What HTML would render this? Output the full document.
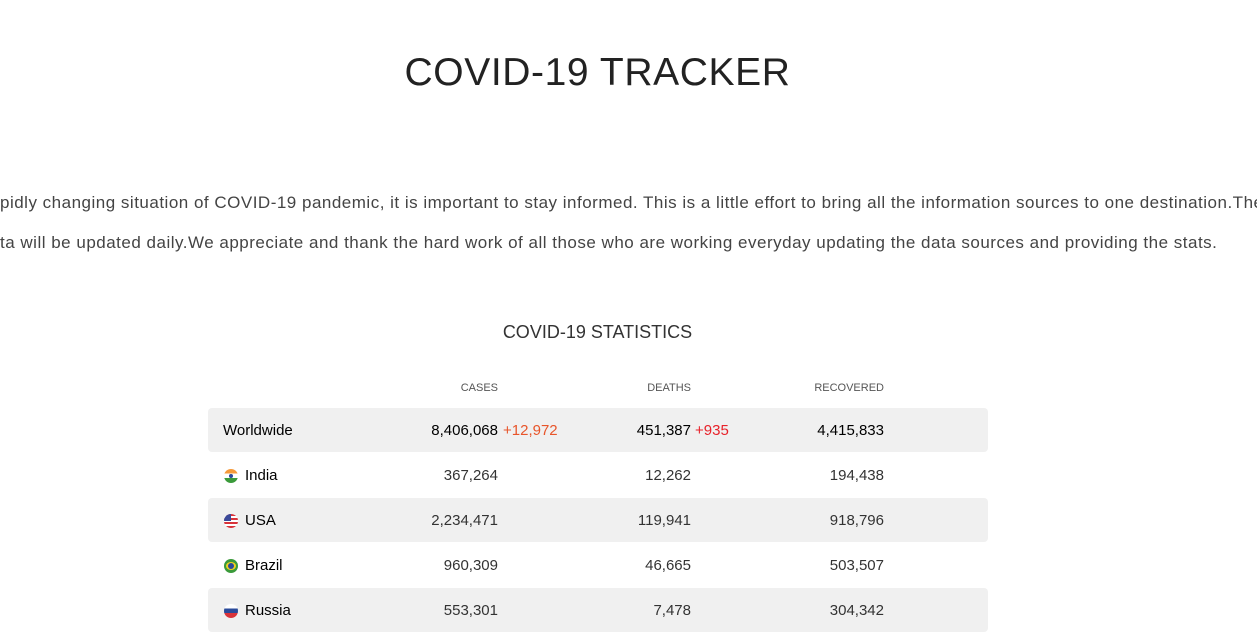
<!DOCTYPE html>
<html><head><meta charset="utf-8"><style>
*{margin:0;padding:0;box-sizing:border-box}
body{width:1257px;height:607px;overflow:hidden;background:#fff;font-family:"Liberation Sans",sans-serif;color:#000;position:relative}
h1{position:absolute;top:51px;left:0;width:1195px;text-align:center;font-weight:normal;font-size:39px;letter-spacing:0.6px;color:#222}
.p{position:absolute;left:0;white-space:nowrap;font-size:17px;letter-spacing:0.5px;color:#444}
h2{position:absolute;top:322px;left:0;width:1195px;text-align:center;font-weight:normal;font-size:18px;color:#333}
.hd{position:absolute;top:382px;font-size:11px;color:#555;text-align:right}
.row{position:absolute;left:208px;width:780px;height:44px;border-radius:4px}
.g{background:#f0f0f0}
.row span{position:absolute;top:14px;font-size:15px;white-space:nowrap;color:#333}
.n{left:15px}
.d{right:297px}
.r{right:104px}
.fl{position:absolute;left:16px;top:16px;width:14px;height:14px;border-radius:50%;overflow:hidden}
</style></head><body>
<h1>COVID-19 TRACKER</h1>
<div class="p" style="top:193px">pidly changing situation of COVID-19 pandemic, it is important to stay informed. This is a little effort to bring all the information sources to one destination.The</div>
<div class="p" style="top:233px">ta will be updated daily.We appreciate and thank the hard work of all those who are working everyday updating the data sources and providing the stats.</div>
<h2>COVID-19 STATISTICS</h2>
<div class="hd" style="right:759px">CASES</div>
<div class="hd" style="right:566px">DEATHS</div>
<div class="hd" style="right:373px">RECOVERED</div>

<div class="row g" style="top:408px"><span class="n" style="color:#000">Worldwide</span><span style="right:490px;color:#000">8,406,068</span><span style="left:295px;color:#e8552a">+12,972</span><span style="right:297px;color:#000">451,387</span><span style="left:487px;color:#e8222a">+935</span><span class="r" style="color:#000">4,415,833</span></div>

<div class="row" style="top:453px"><div class="fl" style="background:linear-gradient(#f59a3a 0 33%,#fff 33% 66%,#3a9a3a 66%)"><div style="position:absolute;left:5px;top:5px;width:4px;height:4px;border-radius:50%;background:#2a4a9a"></div></div><span class="n" style="left:37px;color:#000">India</span><span style="right:490px">367,264</span><span class="d">12,262</span><span class="r">194,438</span></div>

<div class="row g" style="top:498px"><div class="fl" style="background:repeating-linear-gradient(#d8333a 0 2px,#fff 2px 4px)"><div style="position:absolute;left:0;top:0;width:7px;height:7px;background:#3a4a9a"></div></div><span class="n" style="left:37px;color:#000">USA</span><span style="right:490px">2,234,471</span><span class="d">119,941</span><span class="r">918,796</span></div>

<div class="row" style="top:543px"><div class="fl" style="background:#3a9a3a"><div style="position:absolute;left:2px;top:3px;width:10px;height:8px;background:#f0d020;border-radius:50%"></div><div style="position:absolute;left:4px;top:4px;width:6px;height:6px;border-radius:50%;background:#2a4a9a"></div></div><span class="n" style="left:37px;color:#000">Brazil</span><span style="right:490px">960,309</span><span class="d">46,665</span><span class="r">503,507</span></div>

<div class="row g" style="top:588px"><div class="fl" style="background:linear-gradient(#fff 0 33%,#2a4a9a 33% 66%,#d8333a 66%)"></div><span class="n" style="left:37px;color:#000">Russia</span><span style="right:490px">553,301</span><span class="d">7,478</span><span class="r">304,342</span></div>
</body></html>
